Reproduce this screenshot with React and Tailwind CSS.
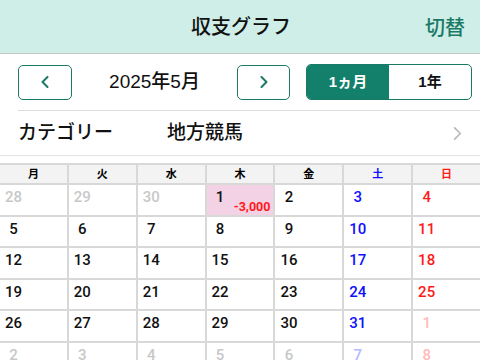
import React from 'react';

const FONT = { fontFamily: '"Liberation Sans", "Noto Sans CJK JP", sans-serif' };
const NUM_FONT = { fontFamily: 'Roboto, "Liberation Sans", sans-serif' };

const DAYS = [
  { label: '月', cls: 'text-black' },
  { label: '火', cls: 'text-black' },
  { label: '水', cls: 'text-black' },
  { label: '木', cls: 'text-black' },
  { label: '金', cls: 'text-black' },
  { label: '土', cls: 'text-[#1010ff]' },
  { label: '日', cls: 'text-[#ff1a1a]' },
];

// tone: cur = this month, out = other month
const WEEKS = [
  [[28, 'out'], [29, 'out'], [30, 'out'], [1, 'cur', -3000], [2, 'cur'], [3, 'cur'], [4, 'cur']],
  [[5, 'cur'], [6, 'cur'], [7, 'cur'], [8, 'cur'], [9, 'cur'], [10, 'cur'], [11, 'cur']],
  [[12, 'cur'], [13, 'cur'], [14, 'cur'], [15, 'cur'], [16, 'cur'], [17, 'cur'], [18, 'cur']],
  [[19, 'cur'], [20, 'cur'], [21, 'cur'], [22, 'cur'], [23, 'cur'], [24, 'cur'], [25, 'cur']],
  [[26, 'cur'], [27, 'cur'], [28, 'cur'], [29, 'cur'], [30, 'cur'], [31, 'cur'], [1, 'out']],
  [[2, 'out'], [3, 'out'], [4, 'out'], [5, 'out'], [6, 'out'], [7, 'out'], [8, 'out']],
];

function numColor(col, tone) {
  if (tone === 'out') {
    if (col === 5) return 'text-[#b8b8ff]';
    if (col === 6) return 'text-[#ffbcbc]';
    return 'text-[#c8c8c8]';
  }
  if (col === 5) return 'text-[#1010ff]';
  if (col === 6) return 'text-[#ff1a1a]';
  return 'text-[#111]';
}

function Chevron({ dir = 'left', color = '#1a7a66', w = 8, h = 12, sw = 2 }) {
  const d = dir === 'left' ? 'M6.5 1 L1.5 6 L6.5 11' : 'M1.5 1 L6.5 6 L1.5 11';
  return (
    <svg width={w} height={h} viewBox="0 0 8 12" fill="none">
      <path d={d} stroke={color} strokeWidth={sw} strokeLinecap="round" strokeLinejoin="round" />
    </svg>
  );
}

export default function App() {
  return (
    <div className="w-[480px] h-[360px] overflow-hidden bg-white" style={FONT}>
      {/* header */}
      <div className="h-[54px] bg-[#cfeee7] border-b border-[#c8c8c8] flex items-center relative">
        <h1 className="flex-1 text-center text-[20px] text-[#111] font-medium pl-[2px]">収支グラフ</h1>
        <span className="absolute right-[15px] top-[13px] text-[20px] text-[#1a7a66] font-medium">切替</span>
      </div>

      {/* month nav */}
      <div className="flex items-center h-[56px] pl-[18px] pr-[8px]">
        <button className="w-[54px] h-[35px] border-[1.5px] border-[#1a7a66] rounded-[5px] flex items-center justify-center">
          <Chevron dir="left" />
        </button>
        <div className="w-[165px] text-center text-[19px] text-[#111] font-medium">2025年5月</div>
        <button className="w-[53px] h-[35px] border-[1.5px] border-[#1a7a66] rounded-[5px] flex items-center justify-center">
          <Chevron dir="right" />
        </button>
        <div className="ml-[16px] w-[166px] h-[36px] border-[1.5px] border-[#1a7a66] rounded-[5px] flex overflow-hidden">
          <div className="w-[82px] bg-[#13806c] text-white flex items-center justify-center text-[15px] font-semibold">1ヵ月</div>
          <div className="flex-1 text-[#111] flex items-center justify-center text-[15px] font-semibold">1年</div>
        </div>
      </div>

      {/* category */}
      <div className="pl-[18px]">
        <div className="h-[45px] border-t border-[#dcdcdc] flex items-center pr-[18px]">
          <span className="w-[149px] text-[19px] text-[#111] font-medium">カテゴリー</span>
          <span className="flex-1 text-[19px] text-[#111] font-medium">地方競馬</span>
          <Chevron dir="right" color="#b8b8b8" w={9} h={15} sw={1.5} />
        </div>
      </div>
      <div className="border-t border-[#e2e2e2] h-[8px]" />

      {/* calendar */}
      <div className="grid grid-cols-7 gap-[2px] bg-[#d8d8d8] pt-[2px]">
        {DAYS.map((d) => (
          <div key={d.label} className={`h-[18px] bg-[#f3f3f3] flex items-center justify-center text-[11px] font-bold ${d.cls}`}>
            {d.label}
          </div>
        ))}
        {WEEKS.map((week, wi) =>
          week.map(([n, tone, amt], ci) => (
            <div
              key={`${wi}-${ci}`}
              className={`h-[29.5px] relative ${amt ? 'bg-[#f3d2e5]' : 'bg-white'}`}
              style={NUM_FONT}
            >
              <div className={`ml-[3px] w-[21px] text-center pt-[3px] text-[15px] leading-[18px] font-medium ${numColor(ci, tone)}`}>
                {n}
              </div>
              {amt && (
                <span className="absolute right-[3px] bottom-[2px] text-[12.5px] leading-[13px] font-bold text-[#ff1a1a]">
                  {amt.toLocaleString('en-US')}
                </span>
              )}
            </div>
          ))
        )}
      </div>
    </div>
  );
}
